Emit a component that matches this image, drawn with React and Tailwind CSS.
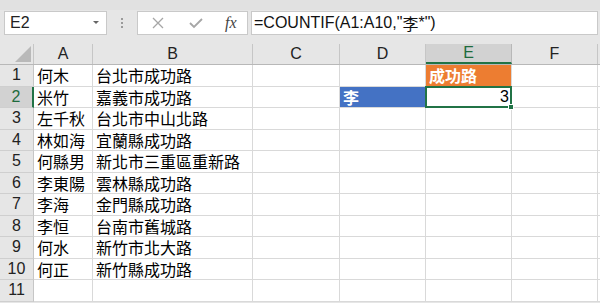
const COLS = [
  { key: 'A', w: 'w-[59px]' },
  { key: 'B', w: 'w-[160px]' },
  { key: 'C', w: 'w-[87px]' },
  { key: 'D', w: 'w-[86px]' },
  { key: 'E', w: 'w-[86px]' },
  { key: 'F', w: 'w-[86px]' },
]

const ROWS = [
  ['何木', '台北市成功路'],
  ['米竹', '嘉義市成功路'],
  ['左千秋', '台北市中山北路'],
  ['林如海', '宜蘭縣成功路'],
  ['何縣男', '新北市三重區重新路'],
  ['李東陽', '雲林縣成功路'],
  ['李海', '金門縣成功路'],
  ['李恒', '台南市舊城路'],
  ['何水', '新竹市北大路'],
  ['何正', '新竹縣成功路'],
  ['', ''],
]

const cjk = "font-['Noto_Sans_CJK_TC','Noto_Sans_CJK_SC',sans-serif]"
const latin = "font-['Liberation_Sans','Noto_Sans',sans-serif]"

const FormulaBar = () => (
  <div className="flex items-center h-[26px] pl-[4px]">
    <div className={`relative w-[103px] h-[24px] bg-white border border-[#c9c9c9] flex items-center pl-[5px] text-[16px] leading-none text-[#222] ${latin}`}>
      E2
      <span className="absolute right-[7px] top-[9px] w-0 h-0 border-l-[3px] border-r-[3px] border-t-[3px] border-l-transparent border-r-transparent border-t-[#666]" />
    </div>
    <div className="w-[30px] flex flex-col items-center gap-[2px]">
      <span className="w-[2px] h-[2px] bg-[#9a9a9a]" />
      <span className="w-[2px] h-[2px] bg-[#9a9a9a]" />
      <span className="w-[2px] h-[2px] bg-[#9a9a9a]" />
    </div>
    <div className="w-[111px] h-[24px] bg-white border border-[#c9c9c9] flex items-center">
      <svg width="12" height="12" viewBox="0 0 12 12" className="ml-[14px]">
        <path d="M1 1 L11 11 M11 1 L1 11" stroke="#a6a6a6" strokeWidth="1.3" fill="none" />
      </svg>
      <svg width="14" height="12" viewBox="0 0 14 12" className="ml-[25px]">
        <path d="M1 6 L5 10 L13 2" stroke="#a6a6a6" strokeWidth="1.8" fill="none" />
      </svg>
      <span className="ml-[22px] text-[16px] leading-none italic text-[#444] font-['Liberation_Serif',serif]">fx</span>
    </div>
    <div className={`ml-[3px] w-[347px] h-[24px] bg-white border border-[#c9c9c9] flex items-center pl-[2px] text-[16px] leading-none text-[#111] ${latin}`}>
      =COUNTIF(A1:A10,"<span className={cjk}>李</span>*")
    </div>
  </div>
)

const HeaderRow = () => (
  <div className="flex h-[21px] border-b border-[#b8b8b8]">
    <div className="relative w-[34px] h-full border-r border-[#c6c6c6] bg-[#e6e6e6]">
      <svg width="16" height="16" viewBox="0 0 16 16" className="absolute right-[2px] bottom-[2px]">
        <path d="M16 0 L16 16 L0 16 Z" fill="#b9b9b9" />
      </svg>
    </div>
    {COLS.map((c) => (
      <div
        key={c.key}
        className={`${c.w} h-full flex items-center justify-center border-r text-[16px] leading-none ${latin} ${
          c.key === 'E'
            ? 'bg-[#d2d2d2] border-[#b8b8b8] text-[#1e6b3c] border-b-2 border-b-[#217346]'
            : 'bg-[#e6e6e6] border-[#c6c6c6] text-[#222]'
        }`}
      >
        {c.key}
      </div>
    ))}
    <div className="flex-1 bg-[#e6e6e6]" />
  </div>
)

const cell = 'h-full border-r border-b border-[#d9d9d9] flex items-center text-[16px] leading-none'

const DataRow = ({ idx, a, b }) => {
  const n = idx + 1
  const active = n === 2
  return (
    <div className="flex h-[21.5px]">
      <div
        className={`w-[34px] h-full flex items-center justify-center text-[16px] leading-none border-b border-[#cfcfcf] ${latin} ${
          active
            ? 'bg-[#d2d2d2] text-[#1e6b3c] border-r-2 border-r-[#217346]'
            : 'bg-[#e6e6e6] text-[#222] border-r border-r-[#c6c6c6]'
        }`}
      >
        {n}
      </div>
      <div className={`w-[59px] bg-white pl-[3px] text-black ${cell} ${cjk}`}>{a}</div>
      <div className={`w-[160px] bg-white pl-[3px] text-black ${cell} ${cjk}`}>{b}</div>
      <div className={`w-[87px] bg-white ${cell}`} />
      {n === 2 ? (
        <div className={`w-[86px] bg-[#4472c4] pl-[3px] font-bold text-white ${cell} border-[#3a62a8] ${cjk}`}>李</div>
      ) : (
        <div className={`w-[86px] bg-white ${cell}`} />
      )}
      {n === 1 ? (
        <div className={`w-[86px] bg-[#ed7d31] pl-[3px] font-bold text-white ${cell} ${cjk}`}>成功路</div>
      ) : n === 2 ? (
        <div className={`relative w-[86px] bg-white justify-end pr-[2px] text-black ${cell} ${latin}`}>
          3
          <span className="absolute -left-[1px] -top-[1px] -right-[1px] -bottom-[1px] border-2 border-[#217346]" />
          <span className="absolute -right-[3px] -bottom-[3px] w-[6px] h-[6px] bg-[#217346] border border-white" />
        </div>
      ) : (
        <div className={`w-[86px] bg-white ${cell}`} />
      )}
      <div className={`w-[86px] bg-white ${cell}`} />
      <div className="flex-1 h-full bg-white border-b border-[#d9d9d9]" />
    </div>
  )
}

export default function App() {
  return (
    <div className="w-[600px] h-[303px] overflow-hidden bg-[#e6e6e6]">
      <div className="h-[10px] bg-[#e1e1e1]" />
      <FormulaBar />
      <div className="h-[8px]" />
      <HeaderRow />
      {ROWS.map((r, i) => (
        <DataRow key={i} idx={i} a={r[0]} b={r[1]} />
      ))}
    </div>
  )
}
